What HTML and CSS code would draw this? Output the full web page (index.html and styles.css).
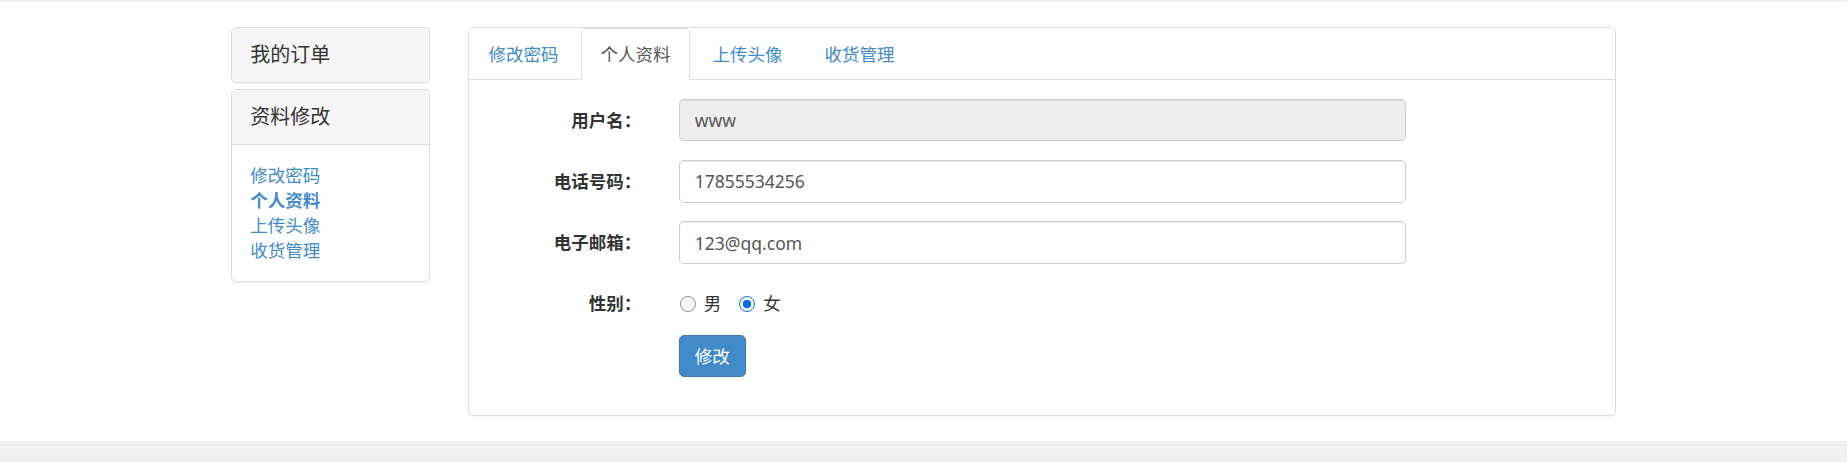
FILE: index.html
```html
<!DOCTYPE html>
<html lang="zh-CN">
<head>
<meta charset="utf-8">
<title>个人资料</title>
<link rel="stylesheet" href="styles.css">
</head>
<body>
<div class="topbar"></div>
<div class="container">
  <aside class="side-col">
    <div class="panel">
      <div class="panel-heading last">我的订单</div>
    </div>
    <div class="panel">
      <div class="panel-heading">资料修改</div>
      <div class="panel-body side-links">
        <a href="#">修改密码</a>
        <a href="#" class="current">个人资料</a>
        <a href="#">上传头像</a>
        <a href="#">收货管理</a>
      </div>
    </div>
  </aside>
  <main class="main-col">
    <div class="panel">
      <ul class="nav-tabs">
        <li><a href="#">修改密码</a></li>
        <li class="active"><a href="#">个人资料</a></li>
        <li><a href="#">上传头像</a></li>
        <li><a href="#">收货管理</a></li>
      </ul>
      <form class="form-body">
        <div class="form-group">
          <label class="control-label">用户名：</label>
          <div class="control"><input class="form-control" type="text" value="www" disabled></div>
        </div>
        <div class="form-group">
          <label class="control-label">电话号码：</label>
          <div class="control"><input class="form-control" type="text" value="17855534256"></div>
        </div>
        <div class="form-group">
          <label class="control-label">电子邮箱：</label>
          <div class="control"><input class="form-control" type="text" value="123@qq.com"></div>
        </div>
        <div class="form-group">
          <label class="control-label">性别：</label>
          <div class="control radios">
            <label class="radio-inline"><input type="radio" name="sex"> 男</label>
            <label class="radio-inline"><input type="radio" name="sex" checked> 女</label>
          </div>
        </div>
        <div class="form-group">
          <div class="control offset"><button type="button" class="btn">修改</button></div>
        </div>
      </form>
    </div>
  </main>
</div>
<div class="footer"></div>
</body>
</html>
```

FILE: styles.css
```css
* { box-sizing: border-box; }
html, body { margin: 0; padding: 0; }
body {
  font-family: "Noto Sans", "Noto Sans CJK SC", sans-serif;
  font-size: 17.5px;
  line-height: 25px;
  color: #333;
  background: #fff;
}
a { color: #428bca; text-decoration: none; }

.topbar { height: 2px; background: #f0f0f0; }

.container {
  width: 1423.5px;
  margin: 25px auto 0;
  padding-bottom: 25.6px;
  display: flex;
  align-items: flex-start;
}
.side-col { width: 16.6667%; padding: 0 18.75px; }
.main-col { width: 83.3333%; padding: 0 18.75px; }

.panel {
  background: #fff;
  border: 1px solid #ddd;
  border-radius: 5px;
  box-shadow: 0 1px 1px rgba(0,0,0,.05);
}
.side-col .panel + .panel { margin-top: 6px; }

.panel-heading {
  background: #f5f5f5;
  padding: 13px 18.75px;
  font-size: 20px;
  line-height: 28px;
  color: #333;
  border-bottom: 1px solid #ddd;
  border-radius: 4px 4px 0 0;
}
.panel-heading.last { border-bottom: 0; border-radius: 4px; height: 54px; }
.panel-body { padding: 18px 18.75px; }
.side-links a { display: block; line-height: 25px; }
.side-links a.current { font-weight: bold; }

.nav-tabs {
  list-style: none;
  margin: 0;
  padding: 0;
  display: flex;
  border-bottom: 1px solid #ddd;
}
.nav-tabs li { margin-right: 2.5px; margin-bottom: -1px; }
.nav-tabs a {
  display: block;
  padding: 12.5px 18.75px;
  line-height: 25px;
  border: 1px solid transparent;
  border-radius: 5px 5px 0 0;
}
.nav-tabs li.active a {
  color: #555;
  background: #fff;
  border-color: #ddd #ddd transparent;
}

.form-body { padding: 18.75px 0; }
.form-group { display: flex; margin-bottom: 18.75px; }
.form-group:last-child { margin-bottom: 18.75px; }
.control-label {
  width: 172.5px;
  flex: none;
  text-align: right;
  font-weight: bold;
  padding-top: 8.75px;
  line-height: 25px;
  color: #333;
}
.control { margin-left: 37.5px; }
.control.offset { margin-left: 210px; }
.form-control {
  display: block;
  width: 727px;
  height: 42.5px;
  padding: 7.5px 15px;
  font: inherit;
  font-size: 17.5px;
  line-height: 25px;
  color: #555;
  background: #fff;
  border: 1px solid #ccc;
  border-radius: 5px;
  box-shadow: inset 0 1px 1px rgba(0,0,0,.075);
  outline: none;
}
.form-control:disabled { background: #eee; color: #555; }

.radios { padding-top: 8.75px; display: flex; }
.radio-inline {
  display: inline-flex;
  align-items: center;
  line-height: 25px;
  color: #333;
  font-weight: normal;
}
.radio-inline + .radio-inline { margin-left: 17px; }
.radio-inline input {
  appearance: none;
  -webkit-appearance: none;
  width: 16px;
  height: 16px;
  margin: 0 8px 0 1px;
  border: 1.6px solid #8d8d95;
  border-radius: 50%;
  background: #fff;
}
.radio-inline input:checked {
  border-color: #0b6ee6;
  background: radial-gradient(circle, #0b6ee6 0 4px, #fff 4.6px);
}

.btn {
  display: inline-block;
  font: inherit;
  font-size: 17.5px;
  line-height: 25px;
  padding: 7.5px 15px;
  color: #fff;
  background: #428bca;
  border: 1px solid #357ebd;
  border-radius: 5px;
  cursor: pointer;
}

.footer { height: 40px; background: #f0f0f0; }
```
